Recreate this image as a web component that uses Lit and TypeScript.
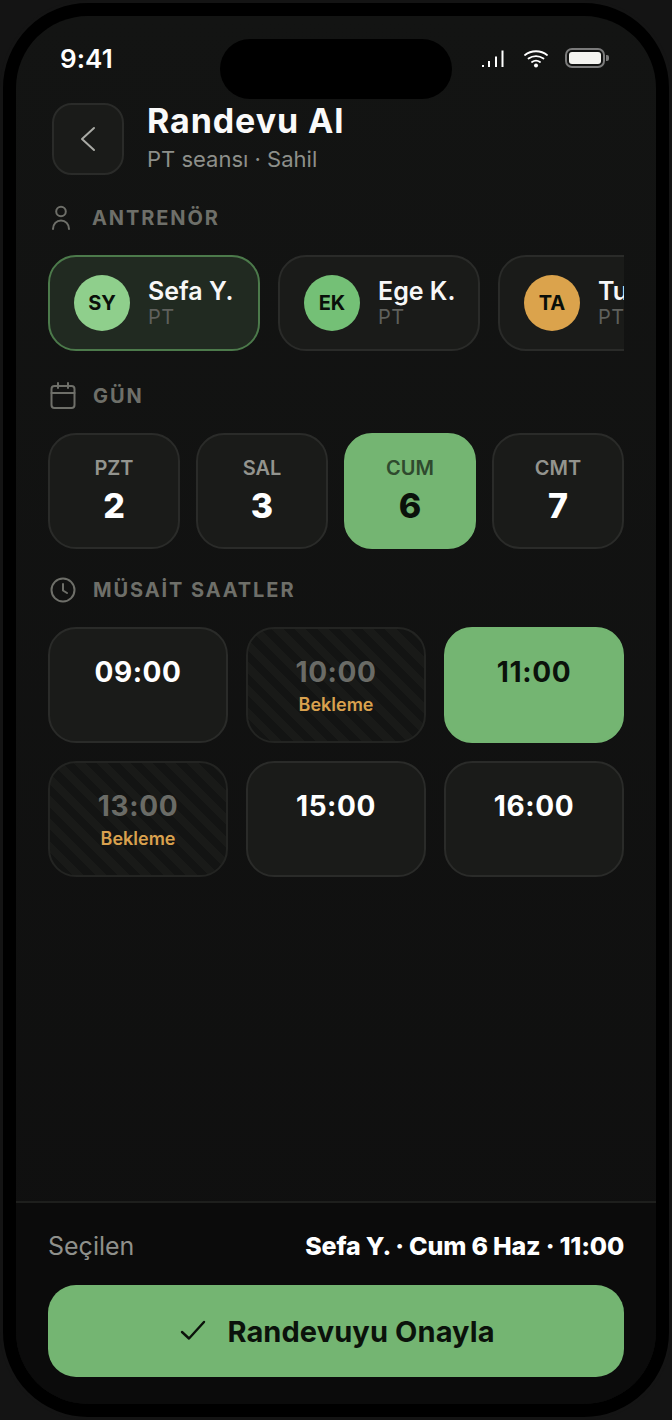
import { LitElement, html, css, nothing } from "lit";
import { customElement } from "lit/decorators.js";

const trainers = [
  { i: "SY", n: "Sefa Y.", c: "#8fcf8c", sel: true, w: 212 },
  { i: "EK", n: "Ege K.", c: "#74c076", sel: false, w: 202 },
  { i: "TA", n: "Tuna A.", c: "#dba34c", sel: false, w: 212 },
];
const days = [
  { d: "PZT", n: "2" },
  { d: "SAL", n: "3" },
  { d: "CUM", n: "6", sel: true },
  { d: "CMT", n: "7" },
];
const times = [
  { t: "09:00" },
  { t: "10:00", wait: true },
  { t: "11:00", sel: true },
  { t: "13:00", wait: true },
  { t: "15:00" },
  { t: "16:00" },
];

@customElement("app-root")
export class AppRoot extends LitElement {
  static styles = css`
    :host { display: block; width: 672px; height: 1420px; background: #141414; font-family: Inter, "Noto Sans", sans-serif; color: #fff; overflow: hidden; }
    .phone { box-sizing: border-box; width: 672px; height: 1420px; padding: 13px; border: 3px solid #141414; background: #000; border-radius: 88px; }
    .screen { position: relative; height: 100%; border-radius: 72px; background: linear-gradient(#131413, #0f0f0f); overflow: hidden; display: flex; flex-direction: column; }
    .island { position: absolute; left: 204px; top: 23px; width: 232px; height: 60px; border-radius: 30px; background: #000; }
    .status { height: 87px; flex: none; display: flex; justify-content: space-between; padding: 26px 44px 0 44px; box-sizing: border-box; }
    .clock { font-size: 26px; font-weight: 600; line-height: 34px; letter-spacing: 0.1px; }
    .sicons { display: flex; align-items: flex-start; }
    .sicons svg { margin-top: 6px; }
    .main { flex: 1; padding: 0 32px; min-height: 0; }
    .head { display: flex; align-items: center; gap: 23px; padding-left: 4px; }
    .back { width: 72px; height: 72px; box-sizing: border-box; border: 2px solid #2a2b29; border-radius: 20px; background: #1a1b19; display: flex; align-items: center; justify-content: center; }
    .title { font-size: 34px; font-weight: 700; line-height: 38px; letter-spacing: 0.9px; color: #fafafa; margin-top: -3px; }
    .sub { font-size: 22px; line-height: 28px; color: #8d8f8a; margin-top: 5px; }
    .label { display: flex; align-items: center; gap: 18px; height: 30px; padding-left: 2px; font-size: 20px; font-weight: 700; letter-spacing: 1.9px; color: #6e6f69; }
    .label svg { flex: none; }
    .label .wide { margin-right: -1px; }
    .l1 { margin-top: 28px; }
    .l2 { margin-top: 30px; }
    .l3 { margin-top: 26px; }
    .trainers { display: flex; gap: 18px; overflow: hidden; margin-top: 22px; }
    .tcard { flex: none; box-sizing: border-box; height: 96px; border: 2px solid #2a2b29; border-radius: 28px; background: #1a1b19; display: flex; align-items: center; gap: 18px; padding: 0 0 0 24px; }
    .tcard.sel { background: #212a21; border-color: #4c7a4b; }
    .av { flex: none; width: 56px; height: 56px; border-radius: 50%; display: flex; align-items: center; justify-content: center; color: #0a0f0a; font-size: 20px; font-weight: 700; }
    .tname { font-size: 25px; font-weight: 600; line-height: 28px; color: #f7f7f7; white-space: nowrap; }
    .trole { font-size: 20px; line-height: 24px; color: #5f605c; letter-spacing: 0.5px; }
    .days { display: grid; grid-template-columns: repeat(4, 1fr); gap: 16px; margin-top: 22px; }
    .day { box-sizing: border-box; height: 116px; border: 2px solid #2a2b29; border-radius: 28px; background: #1a1b19; display: flex; flex-direction: column; align-items: center; padding-top: 20px; }
    .day.sel { background: #74b572; border-color: #74b572; }
    .dl { font-size: 20px; font-weight: 600; line-height: 26px; color: #93948e; }
    .dn { font-size: 34px; font-weight: 800; line-height: 42px; color: #fff; margin-top: 4px; }
    .day.sel .dl { color: #2f4a2e; }
    .day.sel .dn { color: #0b120b; }
    .times { display: grid; grid-template-columns: repeat(3, 1fr); gap: 18px; margin-top: 22px; }
    .time { box-sizing: border-box; height: 116px; border: 2px solid #2a2b29; border-radius: 28px; background: #1a1b19; display: flex; flex-direction: column; align-items: center; padding-top: 24px; }
    .time.wait { background: repeating-linear-gradient(45deg, #191a18 0 8px, #131413 8px 16px); border-color: #232422; }
    .time.sel { background: #74b572; border-color: #74b572; }
    .tt { font-size: 28px; font-weight: 700; line-height: 38px; letter-spacing: 0.6px; color: #fff; }
    .time.wait .tt { color: #6a6b66; }
    .time.sel .tt { color: #0b120b; }
    .bk { font-size: 18px; font-weight: 600; line-height: 24px; color: #d9a14e; margin-top: 2px; }
    .foot { flex: none; height: 203px; box-sizing: border-box; border-top: 2px solid #1e1f1d; background: #0b0b0b; padding: 0 32px; }
    .row { display: flex; justify-content: space-between; align-items: center; height: 82px; box-sizing: border-box; padding-top: 4px; }
    .sl { font-size: 25px; color: #8f908b; }
    .sv { font-size: 25px; font-weight: 800; letter-spacing: -0.2px; color: #fff; white-space: nowrap; }
    .cta { height: 92px; border-radius: 28px; background: #74b572; display: flex; align-items: center; justify-content: center; gap: 20px; color: #0b120b; font-size: 29px; font-weight: 700; letter-spacing: 0.1px; }
  `;

  render() {
    return html`<div class="phone"><div class="screen">
      <div class="island"></div>
      <div class="status">
        <div class="clock">9:41</div>
        <div class="sicons">
          <svg width="132" height="26" viewBox="0 0 132 26">
            <g fill="#fff">
              <rect x="2" y="17" width="2" height="2"/>
              <rect x="8" y="13" width="2" height="6"/>
              <rect x="15" y="8.5" width="2" height="10.5"/>
              <rect x="21.5" y="2.500" width="2" height="16.500"/>
              <circle cx="56" cy="17.500" r="2"/>
            </g>
            <g fill="none" stroke="#fff" stroke-width="1.800" stroke-linecap="round">
              <path d="M45 7C51 2 61 2 67 7"/>
              <path d="M48.500 10.500C53 7.200 59 7.200 63.500 10.500"/>
              <path d="M52 14C54.500 12.200 57.500 12.200 60 14"/>
            </g>
            <rect x="86" y="1" width="38" height="18" rx="6" fill="none" stroke="#7a7a7a" stroke-width="2"/>
            <rect x="89" y="4" width="32" height="12" rx="3" fill="#f4f4f0"/>
            <path d="M126 7h1a2 2 0 0 1 2 2v2a2 2 0 0 1-2 2h-1z" fill="#7a7a7a"/>
          </svg>
        </div>
      </div>
      <div class="main">
        <div class="head">
          <div class="back"><svg width="28" height="28" viewBox="0 0 28 28" fill="none" stroke="#a9aaa5" stroke-width="2" stroke-linecap="round" stroke-linejoin="round"><path d="M20 3 8 14l12 11"/></svg></div>
          <div><div class="title">Randevu Al</div><div class="sub">PT seansı · Sahil</div></div>
        </div>
        <div class="label l1">
          <svg width="24" height="26" viewBox="0 0 24 26" fill="none" stroke="#6e6f69" stroke-width="2"><circle cx="11" cy="6.500" r="4.800"/><path d="M3 24c0-5 3.500-8.500 8-8.500s8 3.500 8 8.500" stroke-linecap="round"/></svg>
          <span>ANTRENÖR</span>
        </div>
        <div class="trainers">
          ${trainers.map((t) => html`<div class="tcard ${t.sel ? "sel" : ""}" style="width:${t.w}px">
            <div class="av" style="background:${t.c}">${t.i}</div>
            <div><div class="tname">${t.n}</div><div class="trole">PT</div></div>
          </div>`)}
        </div>
        <div class="label l2">
          <svg class="wide" width="26" height="28" viewBox="0 0 26 28" fill="none" stroke="#6e6f69" stroke-width="2" stroke-linecap="round"><rect x="1.500" y="4" width="23" height="22" rx="3"/><path d="M1.500 11h23M8 1v5M18 1v5"/></svg>
          <span>GÜN</span>
        </div>
        <div class="days">
          ${days.map((d) => html`<div class="day ${d.sel ? "sel" : ""}"><div class="dl">${d.d}</div><div class="dn">${d.n}</div></div>`)}
        </div>
        <div class="label l3">
          <svg class="wide" width="26" height="26" viewBox="0 0 26 26" fill="none" stroke="#6e6f69" stroke-width="2" stroke-linecap="round" stroke-linejoin="round"><circle cx="13" cy="13" r="11.500"/><path d="M13 7v6.500l4 2.500"/></svg>
          <span>MÜSAİT SAATLER</span>
        </div>
        <div class="times">
          ${times.map((t) => html`<div class="time ${t.sel ? "sel" : ""} ${t.wait ? "wait" : ""}"><div class="tt">${t.t}</div>${t.wait ? html`<div class="bk">Bekleme</div>` : nothing}</div>`)}
        </div>
      </div>
      <div class="foot">
        <div class="row"><div class="sl">Seçilen</div><div class="sv">Sefa Y. · Cum 6 Haz · 11:00</div></div>
        <div class="cta">
          <svg width="30" height="24" viewBox="0 0 30 24" fill="none" stroke="#0b120b" stroke-width="2.400" stroke-linecap="round" stroke-linejoin="round"><path d="M5 13l7 6.500L27 3"/></svg>
          <span>Randevuyu Onayla</span>
        </div>
      </div>
    </div></div>`;
  }
}
